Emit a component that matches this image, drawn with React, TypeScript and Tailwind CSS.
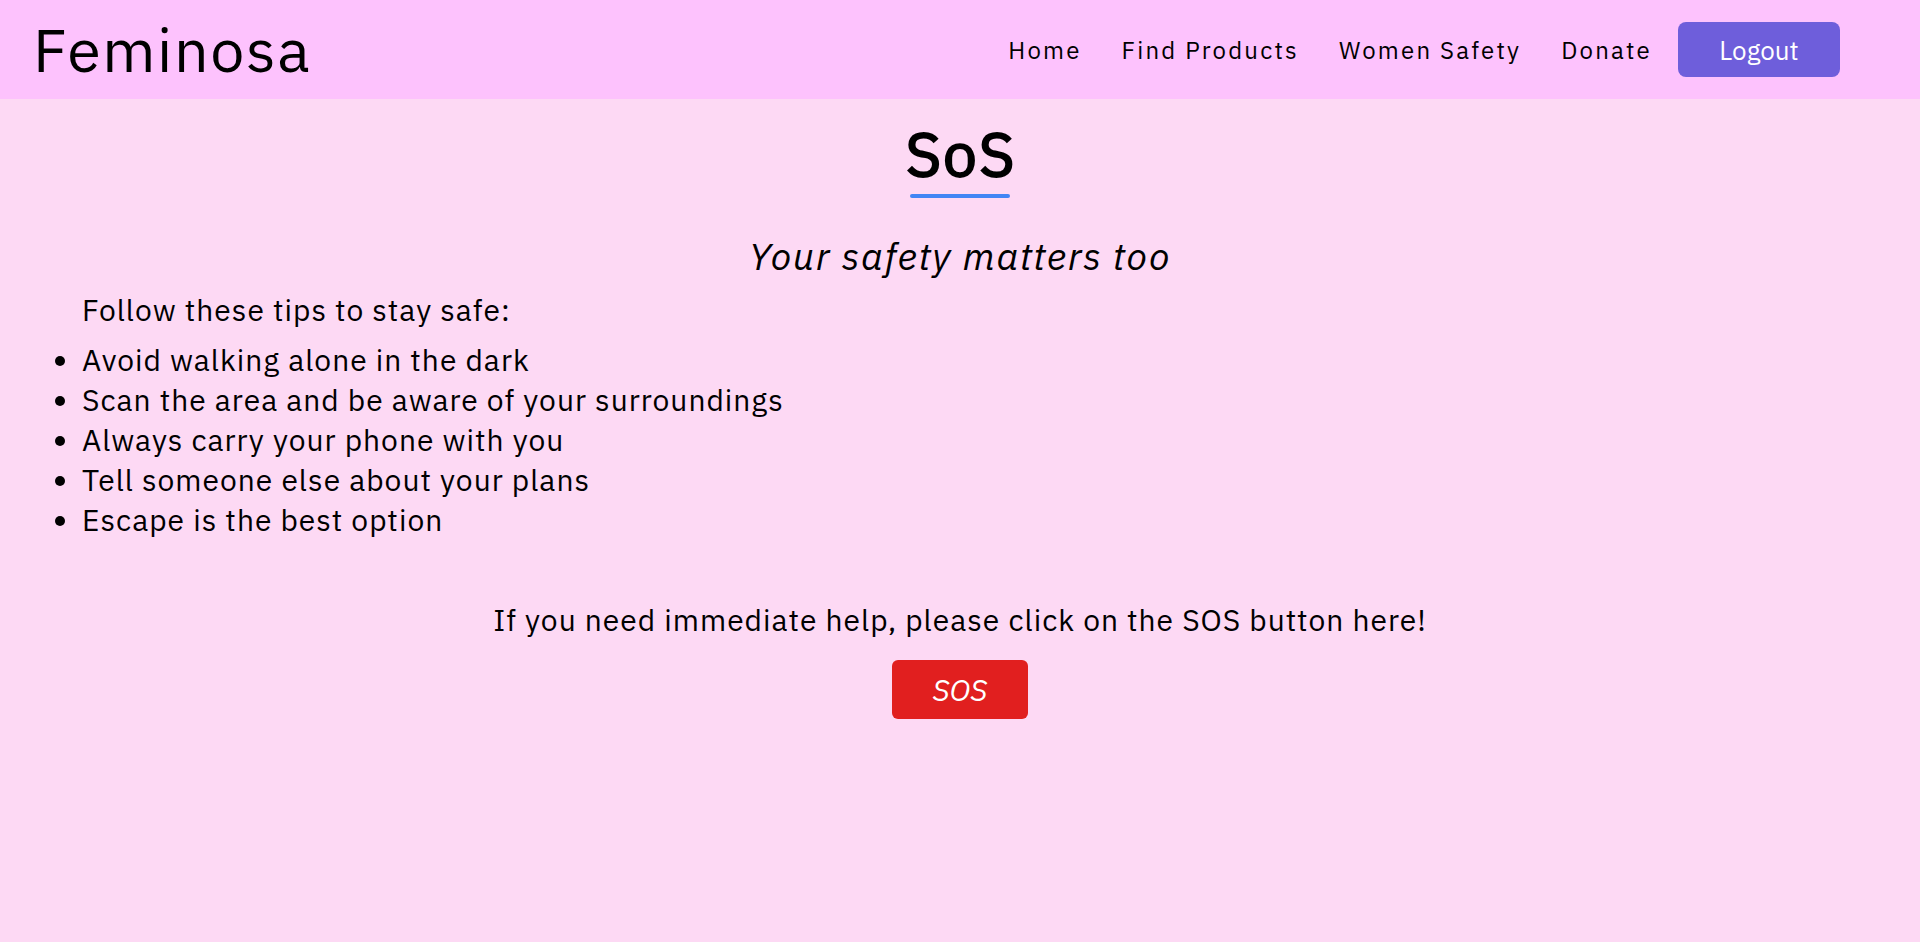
const tips = [
  "Avoid walking alone in the dark",
  "Scan the area and be aware of your surroundings",
  "Always carry your phone with you",
  "Tell someone else about your plans",
  "Escape is the best option",
];

const links = ["Home", "Find Products", "Women Safety", "Donate"];

export default function App() {
  return (
    <div className="min-h-screen bg-[#fdd9f4] text-black font-['IBM_Plex_Sans','Liberation_Sans',sans-serif]">
      {/* top bar */}
      <header className="h-[99px] bg-[#fdc2fd] flex items-center justify-between pl-[33px] pr-[80px]">
        <span className="text-[61px] leading-none tracking-[1.6px]">Feminosa</span>
        <nav className="flex items-center">
          <div className="flex items-center gap-[40px] text-[24px] tracking-[2.2px]">
            {links.map((l) => (
              <a key={l} href="#" className="leading-none">
                {l}
              </a>
            ))}
          </div>
          <button className="ml-[26px] w-[162px] h-[55px] rounded-lg bg-[#6e5edb] text-white text-[26px] leading-none">
            Logout
          </button>
        </nav>
      </header>

      <main className="tracking-[1px]">
        <div className="flex flex-col items-center">
          <h1 className="mt-[23px] text-[63px] leading-none font-medium tracking-normal">SoS</h1>
          <div className="mt-[9px] w-[100px] h-1 rounded-full bg-[#4285f4]"></div>
          <p className="mt-[39px] text-[38px] leading-none italic tracking-[1.5px]">Your safety matters too</p>
        </div>

        <p className="mt-[15px] pl-[82px] text-[30px] leading-[40px]">Follow these tips to stay safe:</p>
        <ul className="mt-[10px] pl-[82px] list-disc text-[30px] leading-[40px]">
          {tips.map((t) => (
            <li key={t}>{t}</li>
          ))}
        </ul>

        <div className="flex flex-col items-center">
          <p className="mt-[60px] text-[30px] leading-[40px]">
            If you need immediate help, please click on the SOS button here!
          </p>
          <button className="mt-[20px] w-[136px] h-[59px] rounded-md bg-[#e11f1f] text-white text-[30px] italic leading-none tracking-normal">
            SOS
          </button>
        </div>
      </main>
    </div>
  );
}
